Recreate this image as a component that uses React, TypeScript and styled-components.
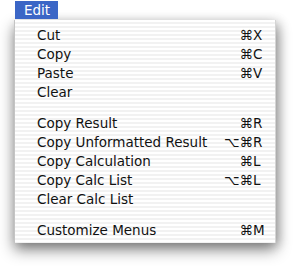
import React from 'react';
import styled, { createGlobalStyle } from 'styled-components';

const GlobalStyle = createGlobalStyle`
  body {
    margin: 0;
    background: #ffffff;
    font-family: "DejaVu Sans", "Liberation Sans", sans-serif;
  }
`;

const Screen = styled.div`
  width: 297px;
  height: 266px;
  overflow: hidden;
  background: #ffffff;
`;

const MenuBar = styled.div`
  height: 20px;
  display: flex;
  align-items: flex-start;
  padding-left: 15px;
  padding-top: 1px;
  box-sizing: border-box;
`;

const MenuTitle = styled.div`
  height: 18px;
  width: 43px;
  box-sizing: border-box;
  padding-left: 9px;
  background: #3b66c6;
  color: #ffffff;
  font-size: 13.5px;
  line-height: 18px;
`;

const Panel = styled.div`
  margin-left: 14px;
  width: 262px;
  height: 223px;
  box-sizing: border-box;
  padding: 6px 0 3px;
  border-left: 1px solid #c4c4c4;
  border-right: 1px solid #d4d4d4;
  background: repeating-linear-gradient(
    to bottom,
    #ffffff 0px,
    #ffffff 2px,
    #f2f2f2 2px,
    #f2f2f2 4px
  );
  box-shadow: 0 7px 14px rgba(0, 0, 0, 0.45), 3px 2px 10px rgba(0, 0, 0, 0.2);
  display: flex;
  flex-direction: column;
`;

const Row = styled.div`
  height: 19px;
  display: grid;
  grid-template-columns: 1fr auto 14px;
  align-items: center;
  padding: 0 8px 0 22px;
  font-size: 13.5px;
  line-height: 19px;
  color: #111111;
  white-space: nowrap;
`;

const Label = styled.span``;

const Mods = styled.span`
  text-align: right;
`;

const Key = styled.span`
  text-align: left;
`;

const Separator = styled.div`
  height: 12px;
`;

type Item = { label: string; mods?: string; key?: string } | null;

const items: Item[] = [
  { label: 'Cut', mods: '⌘', key: 'X' },
  { label: 'Copy', mods: '⌘', key: 'C' },
  { label: 'Paste', mods: '⌘', key: 'V' },
  { label: 'Clear' },
  null,
  { label: 'Copy Result', mods: '⌘', key: 'R' },
  { label: 'Copy Unformatted Result', mods: '⌥⌘', key: 'R' },
  { label: 'Copy Calculation', mods: '⌘', key: 'L' },
  { label: 'Copy Calc List', mods: '⌥⌘', key: 'L' },
  { label: 'Clear Calc List' },
  null,
  { label: 'Customize Menus', mods: '⌘', key: 'M' },
];

const App = () => {
  return (
    <Screen>
      <GlobalStyle />
      <MenuBar>
        <MenuTitle>Edit</MenuTitle>
      </MenuBar>
      <Panel>
        {items.map((item, i) =>
          item ? (
            <Row key={i}>
              <Label>{item.label}</Label>
              <Mods>{item.mods}</Mods>
              <Key>{item.key}</Key>
            </Row>
          ) : (
            <Separator key={i} />
          )
        )}
      </Panel>
    </Screen>
  );
};

export default App;
